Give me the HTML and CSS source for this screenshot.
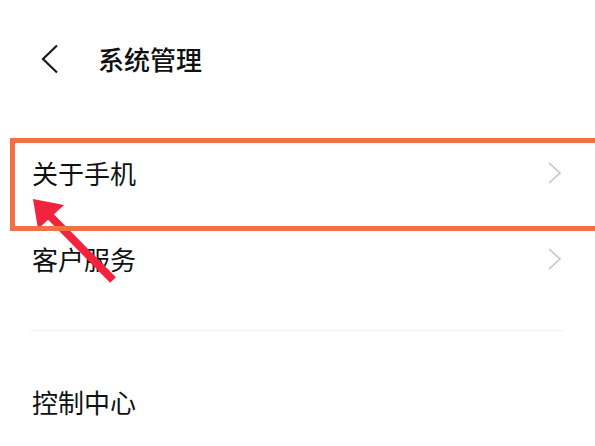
FILE: index.html
```html
<!DOCTYPE html>
<html lang="zh-CN">
<head>
<meta charset="utf-8">
<title>系统管理</title>
<link rel="stylesheet" href="styles.css">
</head>
<body>
<div class="page">
  <header class="header">
    <svg class="back" width="20" height="30" viewBox="0 0 20 30">
      <polyline points="17,1.5 3,15 17,28.5" fill="none" stroke="#1a1a1a" stroke-width="2.2" stroke-linejoin="miter"/>
    </svg>
    <h1 class="title">系统管理</h1>
  </header>
  <main class="list">
    <div class="row">
      <span class="label">关于手机</span>
      <svg class="chev" width="16" height="24" viewBox="0 0 16 24">
        <polyline points="2,2 13,12 2,22" fill="none" stroke="#c4c4c4" stroke-width="1.6"/>
      </svg>
    </div>
    <div class="row">
      <span class="label">客户服务</span>
      <svg class="chev" width="16" height="24" viewBox="0 0 16 24">
        <polyline points="2,2 13,12 2,22" fill="none" stroke="#c4c4c4" stroke-width="1.6"/>
      </svg>
    </div>
    <div class="divider"></div>
    <div class="row">
      <span class="label">控制中心</span>
    </div>
  </main>
  <svg class="arrow" width="130" height="100" viewBox="20 190 130 100">
    <line x1="113" y1="280" x2="50" y2="216" stroke="#f3223d" stroke-width="8" stroke-linecap="butt"/>
    <polygon points="33,199 64,205 38,229" fill="#f3223d"/>
  </svg>
  <div class="highlight"></div>
</div>
</body>
</html>
```
FILE: styles.css
```css
html, body {
  margin: 0;
  padding: 0;
  background: #ffffff;
}
body {
  font-family: "Noto Sans CJK SC", "Noto Sans", sans-serif;
  color: #111111;
  overflow: hidden;
}
.page {
  position: relative;
  width: 595px;
  height: 446px;
  overflow: hidden;
}
.header {
  height: 118px;
  display: flex;
  align-items: center;
  padding-left: 40px;
}
.back {
  display: block;
  margin-right: 38px;
}
.title {
  margin: 0;
  font-size: 26px;
  font-weight: 500;
  letter-spacing: 0;
  color: #111111;
  line-height: 1;
}
.list {
  margin-top: 12px;
}
.row {
  height: 86px;
  display: flex;
  align-items: center;
  justify-content: space-between;
  padding: 0 32px 0 32px;
}
.label {
  font-size: 26px;
  line-height: 1;
  color: #111111;
}
.chev {
  display: block;
}
.divider {
  height: 1px;
  margin: 28px 30px 28px 30px;
  background: #f4f4f4;
}
.arrow {
  position: absolute;
  left: 20px;
  top: 190px;
}
.highlight {
  position: absolute;
  left: 10px;
  top: 138px;
  width: 600px;
  height: 83px;
  border: 5px solid #f07244;
}
```
